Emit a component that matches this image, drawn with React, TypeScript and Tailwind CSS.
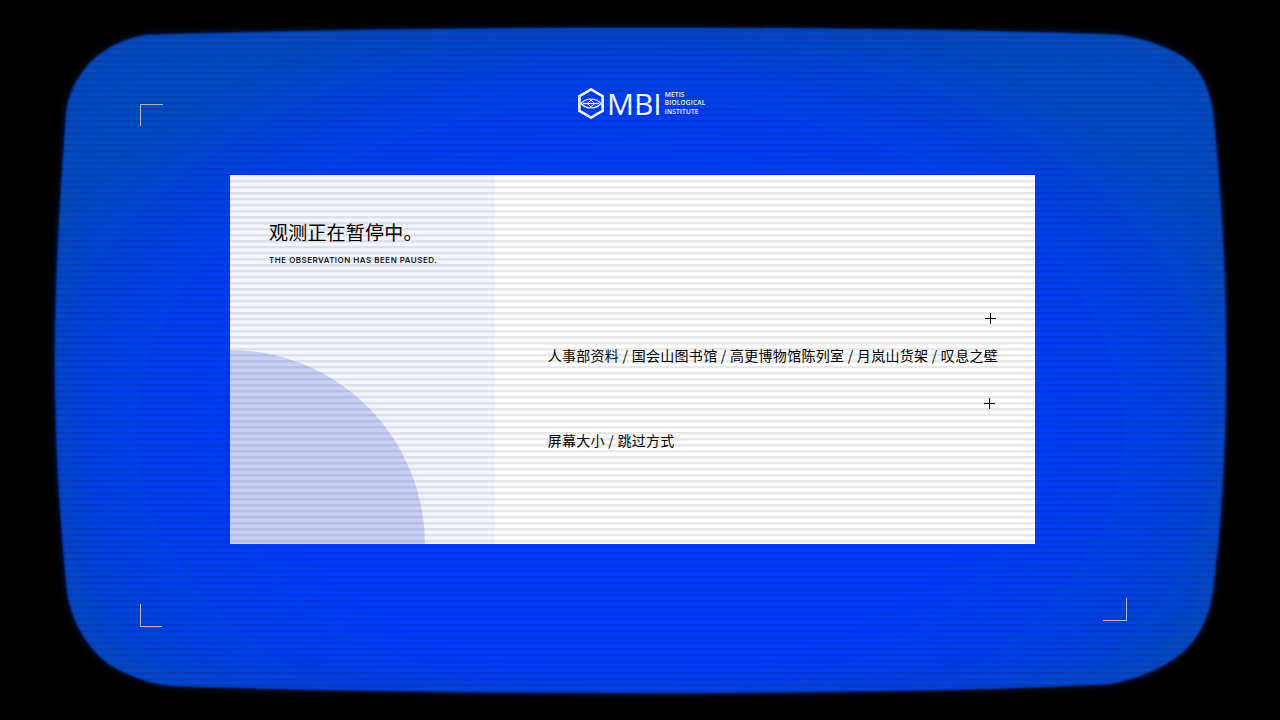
const SCREEN =
  "M640 28C800 28 1000 30 1117 35C1135 37 1160 43 1183 57C1197 66 1209 83 1213 113C1222 200 1226 280 1226 360C1226 440 1222 520 1213 590C1210 615 1200 635 1185 650C1165 668 1140 678 1110 684C1000 690 800 693 640 693C480 693 300 690 173 686C150 684 130 676 110 665C90 650 72 625 67 590C60 520 55 440 55 360C55 280 60 200 66 115C68 95 76 78 90 63C105 48 125 38 147 35C300 30 480 28 640 28Z";

function Plus() {
  return (
    <svg width="11" height="11" viewBox="0 0 11 11" stroke="#000" strokeWidth="1" shapeRendering="crispEdges">
      <path d="M0 5.5H11M5.5 0V11" />
    </svg>
  );
}

export default function App() {
  const cjk = "font-['Noto_Sans_CJK_SC','Noto_Sans',sans-serif]";

  return (
    <div className="relative h-[720px] w-[1280px] overflow-hidden bg-black">
      {/* crt screen shape */}
      <svg className="absolute inset-0" width="1280" height="720" viewBox="0 0 1280 720">
        <defs>
          <radialGradient id="glow" gradientUnits="userSpaceOnUse" cx="0" cy="0" r="1" gradientTransform="translate(630 430) scale(660 440)">
            <stop offset="0" stopColor="#003aff" />
            <stop offset="0.55" stopColor="#003aff" />
            <stop offset="0.8" stopColor="#0040e8" />
            <stop offset="1" stopColor="#0648c4" />
          </radialGradient>
          <clipPath id="screenClip">
            <path d={SCREEN} />
          </clipPath>
          <filter id="soft" x="-5%" y="-5%" width="110%" height="110%">
            <feGaussianBlur stdDeviation="1" />
          </filter>
          <filter id="halo" x="-5%" y="-5%" width="110%" height="110%">
            <feGaussianBlur stdDeviation="4" />
          </filter>
          <filter id="edge" x="-5%" y="-5%" width="110%" height="110%">
            <feGaussianBlur stdDeviation="12" />
          </filter>
        </defs>
        <path d={SCREEN} fill="#06308e" filter="url(#halo)" opacity="0.6" />
        <path d={SCREEN} fill="url(#glow)" filter="url(#soft)" />
        <g clipPath="url(#screenClip)">
          <path d={SCREEN} fill="none" stroke="#0a48b4" strokeWidth="26" filter="url(#edge)" opacity="0.45" />
        </g>
      </svg>

      <div className="relative flex h-full flex-col">
        {/* logo */}
        <div className="ml-[578px] mt-[88px] flex h-[31px] items-center text-white">
          <svg width="26" height="31" viewBox="0 0 26 31" fill="none" stroke="#fff">
            <path d="M13 1.4L24.6 8.2V22.8L13 29.6L1.4 22.8V8.2Z" strokeWidth="2.6" />
            <path d="M3 15.5C8 9.5 18 9.5 23 15.5C18 21.5 8 21.5 3 15.5Z" strokeWidth="1.2" fill="#1a42e8" />
            <path d="M5 15.5H21" strokeWidth="1.2" />
            <path d="M13 12L16.5 15.5L13 19L9.5 15.5Z" strokeWidth="1" />
          </svg>
          <span className="ml-[3px] font-['Open_Sans',sans-serif] text-[30px] font-normal leading-none">MBI</span>
          <div className="ml-[3px] font-['Open_Sans',sans-serif] text-[6.5px] font-semibold leading-[8.5px] tracking-[0.2px]">
            <div>METIS</div>
            <div>BIOLOGICAL</div>
            <div>INSTITUTE</div>
          </div>
        </div>

        {/* panel */}
        <div className="ml-[230px] mt-[56px] flex h-[369px] w-[805px] bg-white text-black">
          <div className="relative w-[264px] overflow-hidden bg-[#f4f6ff] pl-[39px] pt-[42px]">
            <div className="absolute bottom-[-196px] left-[-195px] h-[390px] w-[390px] rounded-full bg-[#c8d0f8]" />
            <h1 className={`relative ${cjk} text-[19px] font-normal leading-[30px] tracking-[0.2px]`}>观测正在暂停中。</h1>
            <p className="relative mt-[6px] font-['Inter',sans-serif] text-[8px] font-medium leading-[14px] tracking-[0.5px] whitespace-nowrap">
              THE OBSERVATION HAS BEEN PAUSED.
            </p>
          </div>
          <div className={`flex-1 pl-[54px] pr-[37px] pt-[138px] ${cjk} text-[14px] leading-[20px] tracking-[0.28px]`}>
            <div className="flex h-[11px] justify-end pr-[2px]">
              <Plus />
            </div>
            <p className="mt-[21px] whitespace-nowrap">人事部资料 / 国会山图书馆 / 高更博物馆陈列室 / 月岚山货架 / 叹息之壁</p>
            <div className="mt-[33px] flex h-[11px] justify-end pr-[3px]">
              <Plus />
            </div>
            <p className="mt-[21px] whitespace-nowrap">屏幕大小 / 跳过方式</p>
          </div>
        </div>
      </div>

      {/* corner brackets */}
      <div className="absolute left-[140px] top-[104px] h-[22px] w-[23px] border-l border-t border-[#bdbdc8]" />
      <div className="absolute left-[140px] top-[604px] h-[23px] w-[22px] border-b border-l border-[#bdbdc8]" />
      <div className="absolute left-[1103px] top-[598px] h-[23px] w-[24px] border-b border-r border-[#bdbdc8]" />

      {/* scanlines */}
      <div className="pointer-events-none absolute inset-0 bg-[repeating-linear-gradient(180deg,rgba(0,0,0,0.09)_0px,rgba(0,0,0,0.09)_2px,rgba(0,0,0,0)_3px,rgba(0,0,0,0)_6px)]" />
    </div>
  );
}
